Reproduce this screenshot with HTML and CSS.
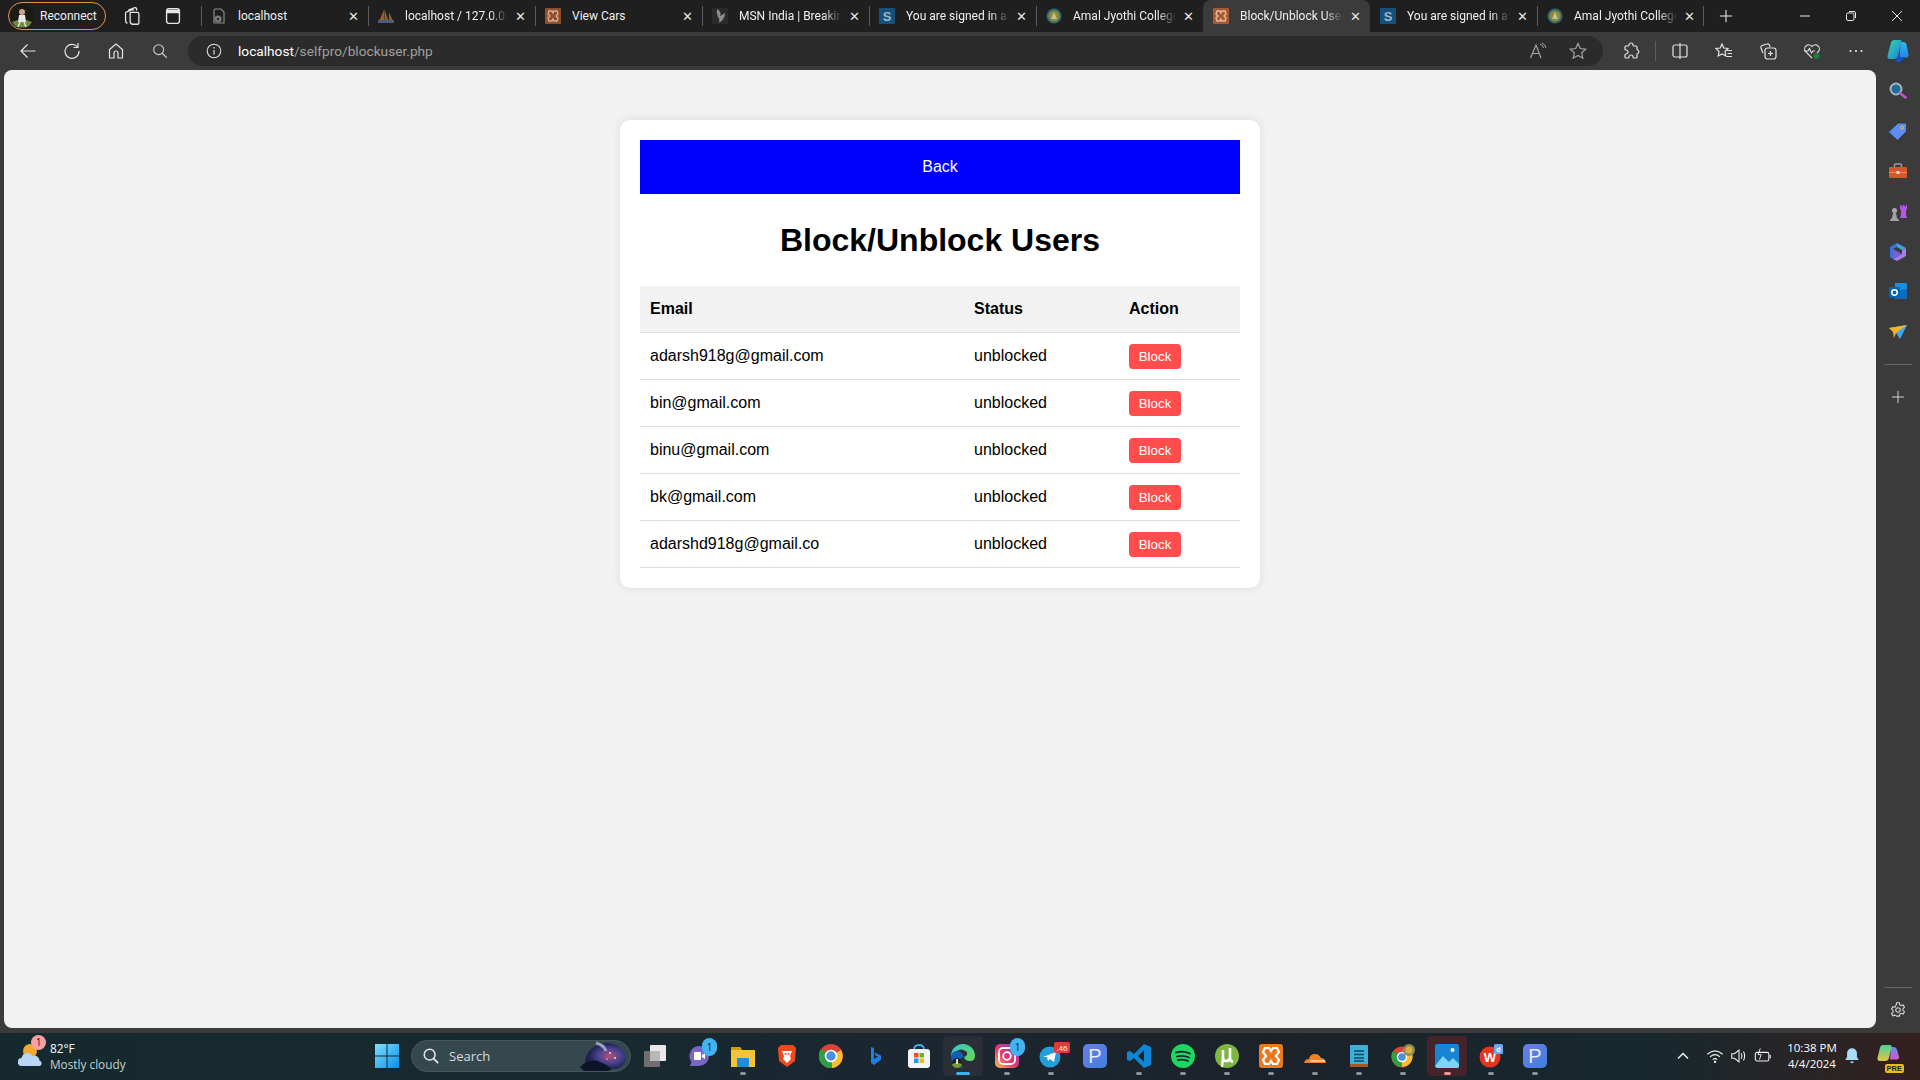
FILE: index.html
```html
<!DOCTYPE html>
<html lang="en">
<head>
<meta charset="utf-8">
<title>Block/Unblock Users</title>
<link rel="stylesheet" href="styles.css">
</head>
<body>
<header class="tabstrip">
  <div class="profile">
    <svg class="avatar" viewBox="0 0 24 24"><circle cx="12" cy="12" r="12" fill="#1b1b14"/><path d="M2 18q10-5 20 0l-3 4q-7 3-14 0z" fill="#6d8a3a"/><circle cx="12" cy="8" r="3" fill="#c9a68a"/><path d="M9 11h6l1 7h-8z" fill="#e8e8e8"/><path d="M10 18l-2 5M14 18l2 5" stroke="#ddd" stroke-width="1.6"/></svg>
    <span>Reconnect</span>
  </div>
  <span class="strip-btn first"><svg viewBox="0 0 24 24" class="ico"><path d="M8 5.500l7-2.500a2 2 0 0 1 2 1v2M5 8l7-3a2 2 0 0 1 2 1M10 8h8a1.500 1.500 0 0 1 1.500 1.500v10a1.500 1.500 0 0 1-1.500 1.500h-5a3 3 0 0 1-3-3zM5 8v9a3 3 0 0 0 2 3" fill="none" stroke="#e6e6e6" stroke-width="1.400"/></svg></span>
  <span class="strip-btn"><svg viewBox="0 0 24 24" class="ico"><rect x="5" y="4" width="14" height="16" rx="2.500" fill="none" stroke="#e6e6e6" stroke-width="1.500"/><path d="M5 5h14v4H5z" fill="#e6e6e6"/></svg></span>
  <div class="tabs">
    <div class="tab"><svg class="fav" viewBox="0 0 16 16"><path d="M4 1h6l3 3v11H3V2z" fill="none" stroke="#8a8a8a" stroke-width="1.200"/><circle cx="7" cy="11" r="3.600" fill="#7b7b7b"/><path d="M5.800 9.800l2.400 2.400M8.200 9.800l-2.400 2.400" stroke="#222"/></svg><span class="tab-title plain">localhost</span><span class="x">✕</span></div>
    <div class="tab"><svg class="fav" viewBox="0 0 16 16"><path d="M1 13L6 2v11zM6.500 1l4 12h-4zM11 4l4 9h-4z" fill="#8d6430"/><rect x="0" y="12" width="16" height="3" fill="#505c7a"/></svg><span class="tab-title">localhost / 127.0.0.1</span><span class="x">✕</span></div>
    <div class="tab"><svg class="fav" viewBox="0 0 16 16"><rect width="16" height="16" rx="1" fill="#8f4f2a"/><path d="M4 3h3l1 2 1-2h3l1 3-2 2 2 2-1 3H9L8 11l-1 2H4l-1-3 2-2-2-2z" fill="none" stroke="#d8b196" stroke-width="1.300"/></svg><span class="tab-title plain">View Cars</span><span class="x">✕</span></div>
    <div class="tab"><svg class="fav" viewBox="0 0 16 16"><rect width="16" height="16" fill="#2b2b2b"/><path d="M5 1q5 3 3 7l5-3q0 6-6 10 1-4-1-6-2-4-1-8z" fill="#8d8d8d"/></svg><span class="tab-title">MSN India | Breaking</span><span class="x">✕</span></div>
    <div class="tab"><svg class="fav" viewBox="0 0 16 16"><rect width="16" height="16" fill="#14507a"/><text x="8" y="12.500" class="fav-s">S</text></svg><span class="tab-title">You are signed in as</span><span class="x">✕</span></div>
    <div class="tab"><svg class="fav" viewBox="0 0 16 16"><circle cx="8" cy="8" r="7.500" fill="#2d6b78"/><circle cx="8" cy="8" r="5.500" fill="#8c8a34"/><path d="M8 4l3 7H5z" fill="#c4c090"/></svg><span class="tab-title">Amal Jyothi College</span><span class="x">✕</span></div>
    <div class="tab active"><svg class="fav" viewBox="0 0 16 16"><rect width="16" height="16" rx="1" fill="#a9592e"/><path d="M4 3h3l1 2 1-2h3l1 3-2 2 2 2-1 3H9L8 11l-1 2H4l-1-3 2-2-2-2z" fill="none" stroke="#e4c0a6" stroke-width="1.300"/></svg><span class="tab-title">Block/Unblock User</span><span class="x">✕</span></div>
    <div class="tab after-active"><svg class="fav" viewBox="0 0 16 16"><rect width="16" height="16" fill="#14507a"/><text x="8" y="12.500" class="fav-s">S</text></svg><span class="tab-title">You are signed in as</span><span class="x">✕</span></div>
    <div class="tab last"><svg class="fav" viewBox="0 0 16 16"><circle cx="8" cy="8" r="7.500" fill="#2d6b78"/><circle cx="8" cy="8" r="5.500" fill="#8c8a34"/><path d="M8 4l3 7H5z" fill="#c4c090"/></svg><span class="tab-title">Amal Jyothi College</span><span class="x">✕</span></div>
  </div>
  <span class="newtab"><svg viewBox="0 0 16 16" class="ico14"><path d="M8 1v14M1 8h14" stroke="#eee" stroke-width="1.200"/></svg></span>
  <div class="winctl">
    <span class="wbtn"><svg viewBox="0 0 12 12" class="ico12"><path d="M1 6h10" stroke="#e8e8e8"/></svg></span>
    <span class="wbtn"><svg viewBox="0 0 12 12" class="ico12"><rect x="1.500" y="3" width="7.500" height="7.500" rx="1.500" fill="none" stroke="#e8e8e8"/><path d="M4 1.500h5a1.500 1.500 0 0 1 1.500 1.500v5" fill="none" stroke="#e8e8e8"/></svg></span>
    <span class="wbtn"><svg viewBox="0 0 12 12" class="ico12"><path d="M1 1l10 10M11 1L1 11" stroke="#e8e8e8"/></svg></span>
  </div>
</header>

<nav class="toolbar">
  <span class="tb-btn first"><svg viewBox="0 0 20 20" class="ico20"><path d="M17.500 10H3M9.500 3.500L3 10l6.500 6.500" fill="none" stroke="#e4e4e4" stroke-width="1.200"/></svg></span>
  <span class="tb-btn"><svg viewBox="0 0 20 20" class="ico20"><path d="M15.500 6A7 7 0 1 0 17 10M16 2v4.500h-4.500" fill="none" stroke="#e4e4e4" stroke-width="1.200"/></svg></span>
  <span class="tb-btn"><svg viewBox="0 0 20 20" class="ico20"><path d="M3.500 8.500L10 3l6.500 5.500V17h-4.500v-5a2 2 0 0 0-4 0v5H3.500z" fill="none" stroke="#e4e4e4" stroke-width="1.200"/></svg></span>
  <span class="tb-btn"><svg viewBox="0 0 20 20" class="ico18"><circle cx="8.500" cy="8.500" r="5.500" fill="none" stroke="#d0d0d0" stroke-width="1.200"/><path d="M12.500 12.500l5 5" stroke="#d0d0d0" stroke-width="1.200"/></svg></span>
  <div class="address">
    <svg viewBox="0 0 20 20" class="ico-info"><circle cx="10" cy="10" r="7.500" fill="none" stroke="#e0e0e0" stroke-width="1.200"/><path d="M10 9v5" stroke="#e0e0e0" stroke-width="1.300"/><circle cx="10" cy="6.500" r=".9" fill="#e0e0e0"/></svg>
    <span class="url"><b>localhost</b>/selfpro/blockuser.php</span>
    <span class="addr-tools">
      <svg viewBox="0 0 20 20" class="ico20"><path d="M2.500 17L8 4l5 13M4.500 12.500h7" fill="none" stroke="#a5a5a5" stroke-width="1.200"/><path d="M12 3q3 1 3.500 4M14 2q3.500 1.500 4 5" fill="none" stroke="#a5a5a5"/></svg>
      <svg viewBox="0 0 20 20" class="ico20"><path d="M10 2.500l2.300 5 5.400.6-4 3.700 1.100 5.400L10 14.500l-4.800 2.700 1.100-5.400-4-3.700 5.400-.6z" fill="none" stroke="#a5a5a5" stroke-width="1.200"/></svg>
    </span>
  </div>
  <span class="tb-btn ext"><svg viewBox="0 0 20 20" class="ico20"><path d="M8 4a2 2 0 0 1 4 0q0 1 1.500 1H15a1 1 0 0 1 1 1v2q0 1 .800 1a2 2 0 0 1 0 3.500q-.8 0-.8 1V16a1 1 0 0 1-1 1h-2q-1 0-1-1a2 2 0 0 0-4 0q0 1-1 1H5a1 1 0 0 1-1-1v-2q0-1 1-1a2 2 0 0 0 0-4q-1 0-1-1V6a1 1 0 0 1 1-1h1.500Q8 5 8 4z" fill="none" stroke="#e4e4e4" stroke-width="1.200" stroke-linejoin="round"/></svg></span>
  <span class="tb-sep"></span>
  <span class="tb-btn split"><svg viewBox="0 0 20 20" class="ico20"><rect x="3" y="4" width="14" height="12" rx="2" fill="none" stroke="#e4e4e4" stroke-width="1.200"/><path d="M10 2v16" stroke="#e4e4e4" stroke-width="1.200"/></svg></span>
  <span class="tb-btn"><svg viewBox="0 0 20 20" class="ico20"><path d="M8 3l1.800 4 4.200.5-3 3 .8 4.500L8 13l-3.800 2 .8-4.500-3-3 4.200-.5zM13 9.500h5M13.500 12.500h4.500M12 15.500h6" fill="none" stroke="#e4e4e4" stroke-width="1.200"/></svg></span>
  <span class="tb-btn"><svg viewBox="0 0 20 20" class="ico20"><path d="M5 12L3 7a2 2 0 0 1 1-2.500L9 3a2 2 0 0 1 2.500 1l.5 2" fill="none" stroke="#e4e4e4" stroke-width="1.200"/><rect x="7" y="7" width="11" height="11" rx="2.500" fill="none" stroke="#e4e4e4" stroke-width="1.200"/><path d="M12.500 10v5M10 12.500h5" stroke="#e4e4e4" stroke-width="1.200"/></svg></span>
  <span class="tb-btn"><svg viewBox="0 0 20 20" class="ico20"><path d="M10 17L3.500 10.500a4 4 0 0 1 6.500-5 4 4 0 0 1 6.500 5L15 12M2 10h4l1.500-2.500 2 4.500 1.500-2h2" fill="none" stroke="#e4e4e4" stroke-width="1.100"/><circle cx="14.500" cy="15" r="3" fill="#1a7f37"/></svg></span>
  <span class="tb-btn"><svg viewBox="0 0 20 20" class="ico20"><circle cx="4.500" cy="10" r="1.100" fill="#e4e4e4"/><circle cx="10" cy="10" r="1.100" fill="#e4e4e4"/><circle cx="15.500" cy="10" r="1.100" fill="#e4e4e4"/></svg></span>
  <span class="tb-btn copilot"><svg viewBox="0 0 24 24" class="ico24"><defs><linearGradient id="cpa" x1="0" y1="0" x2="1" y2="1"><stop offset="0" stop-color="#35d6a5"/><stop offset="1" stop-color="#1c7fe0"/></linearGradient><linearGradient id="cpb" x1="0" y1="0" x2="0" y2="1"><stop offset="0" stop-color="#2cb6f0"/><stop offset="1" stop-color="#1f86ee"/></linearGradient></defs><path d="M16 3h3q2 0 2.500 2.500l2 10q.5 3-2.500 3h-5q-2 0-1.500-2.500L16 3z" fill="url(#cpb)"/><path d="M9 1h6q2 0 1.500 2L13 17q-.8 3-4 3H5q-3 0-2.500-3L6 3.500Q6.500 1 9 1z" fill="url(#cpa)"/><path d="M13 17q-1 4-3 6h5q2 0 3-3l1-2h-5z" fill="#1552c8"/></svg></span>
</nav>

<div class="workspace">
  <main class="page">
    <section class="card">
      <a class="back" href="#">Back</a>
      <h1>Block/Unblock Users</h1>
      <table class="users">
        <thead>
          <tr><th class="c-email">Email</th><th class="c-status">Status</th><th class="c-action">Action</th></tr>
        </thead>
        <tbody>
          <tr><td>adarsh918g@gmail.com</td><td>unblocked</td><td class="act"><button class="block">Block</button></td></tr>
          <tr><td>bin@gmail.com</td><td>unblocked</td><td class="act"><button class="block">Block</button></td></tr>
          <tr><td>binu@gmail.com</td><td>unblocked</td><td class="act"><button class="block">Block</button></td></tr>
          <tr><td>bk@gmail.com</td><td>unblocked</td><td class="act"><button class="block">Block</button></td></tr>
          <tr><td>adarshd918g@gmail.co</td><td>unblocked</td><td class="act"><button class="block">Block</button></td></tr>
        </tbody>
      </table>
    </section>
  </main>
  <aside class="sidebar">
    <span class="side-btn"><svg viewBox="0 0 20 20" class="ico20"><circle cx="8" cy="8" r="5.500" fill="#1f6d9c" stroke="#a8b4ba" stroke-width="2"/><path d="M12.500 12.500l5 4" stroke="#c64fd8" stroke-width="2.600" stroke-linecap="round"/></svg></span>
    <span class="side-btn"><svg viewBox="0 0 20 20" class="ico20"><path d="M1.500 11L10 3h7.500v7.500l-8 8z" fill="#5b8cf5" stroke="#5b8cf5" stroke-linejoin="round"/><circle cx="14" cy="6.500" r="1.500" fill="none" stroke="#f4c430"/></svg></span>
    <span class="side-btn"><svg viewBox="0 0 20 20" class="ico20"><path d="M6.500 6V4a1 1 0 0 1 1-1h5a1 1 0 0 1 1 1v2" fill="none" stroke="#9aa0a6" stroke-width="1.400"/><rect x="1" y="6" width="18" height="11" rx="1" fill="#d9562b"/><path d="M1 11.500h18" stroke="#f08a5d"/><rect x="8.500" y="10" width="3" height="3" fill="#d6d6d6"/></svg></span>
    <span class="side-btn"><svg viewBox="0 0 20 20" class="ico20"><path d="M12 3h1.500v1.500H15V3h1.500v1.500H18V3h1v4l-1 1v5l1 3h-7l1-3V8l-1-1z" fill="#b455e8"/><circle cx="6.500" cy="8.500" r="2.500" fill="#a9a9a9"/><path d="M5 11h3l1 5 2 2v1H2v-1l2-2z" fill="#a0a0a0"/></svg></span>
    <span class="side-btn"><svg viewBox="0 0 20 20" class="ico20"><path d="M9 1L2 5v10l3 2V7l4-2z" fill="#3f6fe0"/><path d="M9 1l9 5-4 2-5-3z" fill="#36a6e0"/><path d="M18 6v8l-9 5-4-2 9-5V8z" fill="#a77ee8"/><path d="M5 7l9 5-9 5z" fill="#7b5fd6"/></svg></span>
    <span class="side-btn"><svg viewBox="0 0 20 20" class="ico20"><path d="M7 1h12v14a2 2 0 0 1-2 2H7z" fill="#1490df"/><path d="M7 9l12-2v10H7z" fill="#0f6cbd"/><rect x="1" y="5" width="11" height="11" rx="1" fill="#0364b8"/><circle cx="6.500" cy="10.500" r="2.700" fill="none" stroke="#fff" stroke-width="1.500"/></svg></span>
    <span class="side-btn"><svg viewBox="0 0 20 20" class="ico20"><path d="M1 6l18-3-7 14-4-6z" fill="#3ea6f5"/><path d="M1 6l18-3L8 11l-2 5-1-6z" fill="#f0b429"/></svg></span>
    <span class="side-sep"></span>
    <span class="side-btn"><svg viewBox="0 0 16 16" class="ico14"><path d="M8 1v14M1 8h14" stroke="#d6d6d6" stroke-width="1.100"/></svg></span>
    <span class="side-spacer"></span>
    <span class="side-sep low"></span>
    <span class="side-btn settings"><svg viewBox="0 0 20 20" class="ico18"><path d="M8.500 2h3l.5 2.300 1.500.8 2.200-.8 1.500 2.600-1.700 1.600v1.800l1.700 1.600-1.500 2.600-2.200-.8-1.500.8-.5 2.300h-3L8 16.500l-1.500-.8-2.200.8-1.500-2.600 1.700-1.600V10.500L2.800 8.900l1.500-2.600 2.200.8L8 4.300z" fill="none" stroke="#d8d8d8" stroke-width="1.200"/><circle cx="10" cy="10" r="2.500" fill="none" stroke="#d8d8d8" stroke-width="1.200"/></svg></span>
  </aside>
</div>

<footer class="taskbar">
  <div class="weather">
    <svg viewBox="0 0 26 26" class="weather-ico"><circle cx="12" cy="8" r="7" fill="#f0a92c"/><path d="M4 23a4 4 0 0 1-.5-8 6 6 0 0 1 11-2 5 5 0 0 1 7 4.500 3 3 0 0 1 .5 5.500z" fill="#b9d6f5"/></svg>
    <span class="w-badge">1</span>
    <div class="w-text"><span class="w-temp">82°F</span><span class="w-desc">Mostly cloudy</span></div>
  </div>
  <span class="start"><svg viewBox="0 0 24 24" class="ico-start"><defs><linearGradient id="win" x1="0" y1="0" x2="1" y2="1"><stop offset="0" stop-color="#7fe0ff"/><stop offset="1" stop-color="#0a8fe8"/></linearGradient></defs><path d="M0 0h11.500v11.500H0zM12.500 0H24v11.500H12.500zM0 12.500h11.500V24H0zM12.500 12.500H24V24H12.500z" fill="url(#win)"/></svg></span>
  <div class="search">
    <svg viewBox="0 0 20 20" class="ico18"><circle cx="8.500" cy="8.500" r="6" fill="none" stroke="#e6e6e6" stroke-width="1.700"/><path d="M13 13l5 5" stroke="#e6e6e6" stroke-width="1.900"/></svg>
    <span>Search</span>
    <svg viewBox="0 0 48 30" class="search-art"><defs><radialGradient id="art" cx=".6" cy=".5"><stop offset="0" stop-color="#b0507c"/><stop offset=".6" stop-color="#44418f"/><stop offset="1" stop-color="#20234e"/></radialGradient></defs><path d="M5 20Q8 4 26 2q16 0 20 14 0 9-10 12H12Q5 26 5 20z" fill="url(#art)"/><path d="M0 26q8-8 18-6 8 3 14 8l-4 2H4z" fill="#0e1428"/><path d="M16 2q8 2 10 8" stroke="#9aa3ba" stroke-width="3" fill="none"/><circle cx="30" cy="12" r="1" fill="#ffd9e4"/><circle cx="35" cy="17" r="1" fill="#ffd9e4"/><circle cx="27" cy="18" r="1" fill="#f07aa0"/></svg>
  </div>
  <div class="apps">
    <span class="app"><svg viewBox="0 0 24 24" class="app-ico"><rect x="7" y="1" width="16" height="16" rx="1" fill="#e8e8e8"/><rect x="1" y="7" width="16" height="16" rx="1" fill="#6f6f6f"/><rect x="7" y="7" width="10" height="10" fill="#b8b8b8"/></svg></span>
    <span class="app"><svg viewBox="0 0 24 24" class="app-ico"><path d="M12 2a10 10 0 0 1 0 20H3l1.500-4A10 10 0 0 1 12 2z" fill="#7b64c8"/><rect x="7" y="8" width="7" height="8" rx="1" fill="#fff"/><path d="M15 11l3-2v6l-3-2z" fill="#fff"/></svg><span class="bubble">1</span></span>
    <span class="app running"><svg viewBox="0 0 24 24" class="app-ico"><path d="M0 3h9l2 3h13v17H0z" fill="#f5c530"/><path d="M0 3h9l2 3H0z" fill="#d09a1a"/><rect x="6" y="14" width="12" height="9" rx="1" fill="#1a8fd8"/></svg></span>
    <span class="app"><svg viewBox="0 0 24 24" class="app-ico"><path d="M6 1h12l3 3-1 13-8 6-8-6L3 4z" fill="#f1481d"/><path d="M7 7h10l-2 5 1 3-4 4-4-4 1-3z" fill="#fff"/><path d="M9.500 10h2M12.500 10h2" stroke="#f1481d" stroke-width="1.400"/></svg></span>
    <span class="app"><svg viewBox="0 0 24 24" class="app-ico"><circle cx="12" cy="12" r="12" fill="#db4437"/><path d="M12 12L22 6a12 12 0 0 1-9 18z" fill="#fbc02d"/><path d="M12 12L13 24A12 12 0 0 1 2 5z" fill="#2f9e44"/><circle cx="12" cy="12" r="5.500" fill="#4a90e2" stroke="#fff" stroke-width="1.600"/></svg></span>
    <span class="app"><svg viewBox="0 0 24 24" class="app-ico"><path d="M8 3l3 1v11l4-2.500-2.500-1-1-3 6.500 3v4l-7 5.500-3-2z" fill="#1f7fe8"/></svg></span>
    <span class="app"><svg viewBox="0 0 24 24" class="app-ico"><path d="M7 6q0-5 5-5t5 5" fill="none" stroke="#3ab4e6" stroke-width="1.800"/><rect x="1" y="5" width="22" height="19" rx="3" fill="#f4f4f4"/><rect x="7" y="9" width="4.500" height="4.500" fill="#e8502a"/><rect x="12.500" y="9" width="4.500" height="4.500" fill="#6ab42d"/><rect x="7" y="14.500" width="4.500" height="4.500" fill="#1e9ae0"/><rect x="12.500" y="14.500" width="4.500" height="4.500" fill="#f6b916"/></svg></span>
    <span class="app active-app"><svg viewBox="0 0 24 24" class="app-ico"><defs><linearGradient id="edge" x1="0" y1="0" x2="1" y2="1"><stop offset="0" stop-color="#36c6d8"/><stop offset="1" stop-color="#68d84a"/></linearGradient></defs><path d="M0 12A12 12 0 0 1 24 12q0 5-5 5t-6-4q4-1 3-5Q10 3 4 8q-3 2-4 4z" fill="url(#edge)"/><path d="M0 12q1-5 6-5t7 6q-5 1-4 6l3 5A12 12 0 0 1 0 12z" fill="#0f5fb8"/><circle cx="6" cy="19" r="5" fill="#20201c"/><path d="M1 20q5-2 10 0-1 4-5 4t-5-4z" fill="#7a9a34"/><rect x="5" y="15" width="2" height="5" fill="#ddd"/></svg></span>
    <span class="app running"><svg viewBox="0 0 24 24" class="app-ico"><defs><linearGradient id="ig" x1="0" y1="1" x2="1" y2="0"><stop offset="0" stop-color="#fdc15a"/><stop offset=".45" stop-color="#e8356a"/><stop offset="1" stop-color="#7c3bd0"/></linearGradient></defs><rect width="24" height="24" rx="5" fill="url(#ig)"/><rect x="4" y="4" width="16" height="16" rx="4" fill="none" stroke="#fff" stroke-width="1.800"/><circle cx="12" cy="12" r="3.800" fill="none" stroke="#fff" stroke-width="1.800"/></svg><span class="bubble">1</span></span>
    <span class="app running"><svg viewBox="0 0 24 24" class="app-ico"><circle cx="11" cy="13" r="10.500" fill="#229ed9"/><path d="M4 13l13-5-2 10-4-3-2 2-1-4z" fill="#fff"/></svg><span class="tg-badge">.46</span></span>
    <span class="app"><span class="p-tile">P</span></span>
    <span class="app running"><svg viewBox="0 0 24 24" class="app-ico"><path d="M17 0l7 3v18l-7 3L7 14l-4 3-3-1V8l3-1 4 3zM17 6l-6 6 6 6z" fill="#0f86d6"/></svg></span>
    <span class="app running"><svg viewBox="0 0 24 24" class="app-ico"><circle cx="12" cy="12" r="12" fill="#1ed760"/><path d="M5 8.500q7-2 14 1M6 12.500q6-1.500 12 1M7 16q5-1 10 1" fill="none" stroke="#123" stroke-width="1.800" stroke-linecap="round"/></svg></span>
    <span class="app running"><svg viewBox="0 0 24 24" class="app-ico"><circle cx="12" cy="12" r="12" fill="#7eb640"/><path d="M8 6v8q0 3 3 3t4-3V4M15 14q0 3 3 4" fill="none" stroke="#fff" stroke-width="2.600"/><path d="M8 14l-1 9" stroke="#fff" stroke-width="2.400"/></svg></span>
    <span class="app running"><svg viewBox="0 0 24 24" class="app-ico"><rect width="24" height="24" rx="3" fill="#ed7a1f"/><path d="M6 4h4l2 3 2-3h4l2 4-3 4 3 4-2 4h-4l-2-3-2 3H6l-2-4 3-4-3-4z" fill="none" stroke="#fff" stroke-width="2.200"/></svg></span>
    <span class="app running"><svg viewBox="0 0 24 24" class="app-ico"><path d="M1 19q1-4 5-4 1-5 6-5 4 0 6 4 4 0 5 5z" fill="#f48120"/><path d="M7 17h15" stroke="#fff"/></svg></span>
    <span class="app running"><svg viewBox="0 0 24 24" class="app-ico"><rect x="3" y="1" width="18" height="22" rx="1" fill="#3fb1d8"/><rect x="3" y="20" width="18" height="3" fill="#a8561f"/><path d="M7 7h10M7 10.500h10M7 14h10M7 17h10" stroke="#12475c" stroke-width="1.500"/></svg></span>
    <span class="app running"><svg viewBox="0 0 24 24" class="app-ico"><circle cx="11" cy="13" r="10.500" fill="#db4437"/><path d="M11 13L21 9a10.500 10.500 0 0 1-10 14z" fill="#fbc02d"/><path d="M11 13v10A10.500 10.500 0 0 1 2 7z" fill="#2f9e44"/><circle cx="11" cy="13" r="4.500" fill="#4a90e2" stroke="#fff" stroke-width="1.400"/><circle cx="18" cy="6" r="6" fill="#8e8a5c"/><circle cx="18" cy="6" r="3.500" fill="#d9b33c"/></svg></span>
    <span class="app focused"><svg viewBox="0 0 24 24" class="app-ico"><rect width="24" height="24" rx="2" fill="#1784d6"/><path d="M0 22l8-10 6 6 4-4 6 6v2a2 2 0 0 1-2 2H2z" fill="#7fd4f5"/><circle cx="17.500" cy="6" r="2" fill="#fff"/></svg></span>
    <span class="app running"><svg viewBox="0 0 24 24" class="app-ico"><circle cx="11" cy="13" r="10.500" fill="#e8341f"/><text x="11" y="18" class="wps-w">W</text><rect x="15" y="0" width="9" height="10" rx="1.500" fill="#6aa8f0"/><text x="19.500" y="8" class="wps-d">d</text></svg></span>
    <span class="app running"><span class="p-tile">P</span></span>
  </div>
  <div class="tray">
    <span class="tray-i chevron"><svg viewBox="0 0 12 12" class="ico12"><path d="M1 8.500L6 3.500l5 5" fill="none" stroke="#f0f0f0" stroke-width="1.500"/></svg></span>
    <span class="tray-i"><svg viewBox="0 0 20 20" class="ico18"><path d="M1.500 8q8.500-7.500 17 0M4.500 11q5.500-5 11 0M7.500 14q2.500-2 5 0" fill="none" stroke="#f0f0f0" stroke-width="1.300"/><circle cx="10" cy="16.500" r="1.300" fill="#f0f0f0"/></svg></span>
    <span class="tray-i"><svg viewBox="0 0 20 20" class="ico18"><path d="M2 7.500h3L10 3.500v13l-5-4H2z" fill="none" stroke="#f0f0f0" stroke-width="1.200"/><path d="M12.500 7q1.500 3 0 6M15 5q2.500 5 0 10" fill="none" stroke="#f0f0f0" stroke-width="1.200"/></svg></span>
    <span class="tray-i"><svg viewBox="0 0 20 20" class="ico18"><rect x="1.500" y="6" width="15" height="9.500" rx="2" fill="none" stroke="#f0f0f0" stroke-width="1.200"/><path d="M18 9v3.500" stroke="#f0f0f0" stroke-width="1.300"/><path d="M7 1.500L4.500 8.500h3.500L6 14" fill="none" stroke="#f0f0f0"/></svg></span>
    <div class="clock"><span>10:38 PM</span><span>4/4/2024</span></div>
    <span class="bell"><svg viewBox="0 0 20 20" class="ico18"><path d="M10 1.500a5.500 5.500 0 0 1 5.500 5.500v4l2 3.500h-15l2-3.500V7A5.500 5.500 0 0 1 10 1.500z" fill="#a9dcf5"/><path d="M8 16h4a2 2 0 0 1-4 0z" fill="#a9dcf5"/></svg></span>
    <span class="tray-copilot"><svg viewBox="0 0 24 24" class="ico24"><defs><linearGradient id="cp2" x1="0" y1="0" x2="0" y2="1"><stop offset="0" stop-color="#45d6a0"/><stop offset="1" stop-color="#e8c23c"/></linearGradient><linearGradient id="cp3" x1="0" y1="0" x2="0" y2="1"><stop offset="0" stop-color="#6a8cf0"/><stop offset="1" stop-color="#d458c8"/></linearGradient></defs><path d="M15 3h3q2 0 3 2.500l2 7q.5 3-2.500 3H14z" fill="url(#cp3)"/><path d="M7 1h7q2 0 1.500 2L13 14q-.8 3-4 3H4q-3 0-2.500-3L4 3.500Q4.500 1 7 1z" fill="url(#cp2)"/></svg><span class="pre">PRE</span></span>
  </div>
</footer>
</body>
</html>
```

FILE: styles.css
```css
* { box-sizing: border-box; }
html, body { margin: 0; height: 100%; }
body {
  width: 1920px;
  height: 1080px;
  overflow: hidden;
  background: #3b3b3b;
  display: flex;
  flex-direction: column;
  font-family: "Liberation Sans", Arial, sans-serif;
}
svg { display: block; flex: none; }
.ico { width: 24px; height: 24px; }
.ico12 { width: 12px; height: 12px; }
.ico14 { width: 14px; height: 14px; }
.ico18 { width: 18px; height: 18px; }
.ico20 { width: 20px; height: 20px; }
.ico24 { width: 24px; height: 24px; }

/* tab strip */
.tabstrip {
  height: 32px;
  flex: none;
  background: #1f1f1f;
  display: flex;
  align-items: center;
  color: #f0f0f0;
  font: 12px Roboto, sans-serif;
}
.profile {
  width: 98px;
  height: 28px;
  margin-left: 8px;
  border: 1.5px solid #dd9453;
  border-radius: 14px;
  display: flex;
  align-items: center;
  gap: 6px;
  padding-left: 1px;
}
.avatar { width: 24px; height: 24px; }
.strip-btn { width: 41px; display: flex; justify-content: center; }
.strip-btn.first { margin-left: 5px; }
.strip-btn .ico { width: 22px; height: 22px; }
.tabs { display: flex; height: 32px; margin-left: 8px; }
.tab {
  width: 167px;
  height: 32px;
  display: flex;
  align-items: center;
  padding: 0 5px 0 10px;
  position: relative;
}
.tab::before {
  content: "";
  position: absolute;
  left: 0;
  top: 6px;
  width: 1px;
  height: 20px;
  background: #5a5a5a;
}
.tab.last::after {
  content: "";
  position: absolute;
  right: 0;
  top: 6px;
  width: 1px;
  height: 20px;
  background: #5a5a5a;
}
.tab.active { background: #3b3b3b; border-radius: 8px 8px 0 0; }
.tab.active::before, .tab.after-active::before { display: none; }
.fav { width: 16px; height: 16px; }
.tab-title {
  flex: 1;
  min-width: 0;
  margin-left: 11px;
  white-space: nowrap;
  overflow: hidden;
  -webkit-mask-image: linear-gradient(90deg, #000 82%, transparent 100%);
  mask-image: linear-gradient(90deg, #000 82%, transparent 100%);
}
.tab-title.plain { -webkit-mask-image: none; mask-image: none; }
.x { width: 20px; text-align: center; font-size: 13px; color: #e6e6e6; margin-left: 2px; }
.fav-s { font: bold 13px "Liberation Sans", sans-serif; fill: #9ab8cc; text-anchor: middle; }
.newtab { width: 44px; display: flex; justify-content: center; }
.winctl { margin-left: auto; display: flex; }
.wbtn { width: 46px; display: flex; justify-content: center; }

/* toolbar */
.toolbar {
  height: 38px;
  flex: none;
  background: #3b3b3b;
  display: flex;
  align-items: center;
  font: 13.700px Roboto, sans-serif;
}
.tb-btn { width: 44px; height: 30px; display: flex; align-items: center; justify-content: center; }
.tb-btn.first { margin-left: 6px; }
.address {
  width: 1415px;
  height: 30px;
  margin-left: 6px;
  background: #2b2b2b;
  border-radius: 15px;
  display: flex;
  align-items: center;
  padding-left: 17px;
  color: #a0a0a0;
}
.ico-info { width: 18px; height: 18px; }
.url { margin-left: 15px; }
.url b { font-weight: 400; color: #fff; }
.addr-tools { margin-left: auto; display: flex; gap: 20px; padding-right: 15px; }
.ext { margin-left: 6px; }
.tb-sep { width: 1px; height: 20px; background: #5e5e5e; margin-left: 2px; }
.split { margin-left: 2px; }
.copilot { margin-left: -3px; }

/* main */
.workspace { flex: none; height: 958px; display: flex; }
.page {
  width: 1872px;
  margin-left: 4px;
  background: #f2f2f2;
  border-radius: 8px;
  padding-top: 50px;
}
.card {
  width: 640px;
  margin: 0 auto;
  background: #fff;
  padding: 20px;
  border-radius: 10px;
  box-shadow: 0 0 10px rgba(0, 0, 0, .1);
}
.back {
  display: block;
  height: 54px;
  line-height: 54px;
  background: #00f;
  color: #fff;
  text-align: center;
  text-decoration: none;
  font-size: 16px;
}
h1 {
  margin: 28px 0 27px;
  font-size: 32px;
  line-height: 37px;
  text-align: center;
  color: #000;
}
.users { width: 100%; table-layout: fixed; border-collapse: collapse; font-size: 16px; }
.users th, .users td { text-align: left; border-bottom: 1px solid #ddd; padding: 10px 10px 11px; }
.users td.act { padding: 11px 10px 10px; }
.users th { background: #f2f2f2; padding: 14px 10px; }
.c-email { width: 324px; }
.c-status { width: 155px; }
.block {
  display: inline-block;
  width: 52px;
  height: 25px;
  background: #ff4d4d;
  color: #fff;
  border: 0;
  border-radius: 4px;
  padding: 5px 0;
  font: 13.333px "Liberation Sans", Arial, sans-serif;
}

/* sidebar */
.sidebar {
  width: 44px;
  display: flex;
  flex-direction: column;
  align-items: center;
  padding-top: 1px;
}
.side-btn { width: 44px; height: 40.200px; display: flex; align-items: center; justify-content: center; flex: none; }
.side-sep { width: 28px; height: 1px; background: #666; margin: 12px 0; flex: none; }
.side-sep.low { margin: 0 0 2px; }
.side-spacer { flex: 1; }
.settings { margin-bottom: -2px; }

/* taskbar */
.taskbar {
  margin-top: 5px;
  height: 47px;
  padding-bottom: 2px;
  flex: none;
  display: flex;
  align-items: center;
  background: linear-gradient(90deg, #15292e 0, #172a30 28%, #1b2630 50%, #1c2229 66%, #16282e 85%, #2a2425 95%, #351f1f 100%);
  color: #fff;
  font: 12px "Open Sans", sans-serif;
}
.weather { width: 375px; display: flex; align-items: center; padding-left: 18px; position: relative; }
.weather-ico { width: 26px; height: 26px; }
.w-badge {
  position: absolute;
  left: 31px;
  top: -5px;
  width: 15px;
  height: 15px;
  border-radius: 50%;
  background: #f8a0a6;
  color: #222;
  font-size: 10px;
  line-height: 15px;
  text-align: center;
}
.w-text { display: flex; flex-direction: column; margin-left: 6px; line-height: 16px; font-size: 11.800px; }
.w-desc { color: #c9d0d2; }
.start { width: 24px; height: 24px; display: block; }
.ico-start { width: 24px; height: 24px; }
.search {
  width: 220px;
  height: 32px;
  margin-left: 12px;
  border-radius: 16px;
  background: #35484d;
  border: 1px solid #46585c;
  display: flex;
  align-items: center;
  padding-left: 10px;
  color: #d6dcdd;
  font-size: 13px;
  position: relative;
}
.search span { margin-left: 9px; }
.search-art { position: absolute; right: 2px; top: 0; width: 48px; height: 30px; }
.apps { display: flex; margin-left: 2px; height: 45px; }
.app {
  width: 44px;
  height: 45px;
  display: flex;
  align-items: center;
  justify-content: center;
  position: relative;
}
.app-ico { width: 24px; height: 24px; }
.running::after, .active-app::after, .focused::after {
  content: "";
  position: absolute;
  left: 50%;
  bottom: 3px;
  width: 6px;
  height: 3px;
  margin-left: -3px;
  border-radius: 2px;
  background: #8d9296;
}
.active-app::before, .focused::before {
  content: "";
  position: absolute;
  left: 2px;
  right: 2px;
  top: 3px;
  bottom: 2px;
  border-radius: 4px;
  background: #2a2f37;
}
.focused::before { background: #43242a; }
.active-app svg, .focused svg { position: relative; }
.active-app::after { width: 14px; margin-left: -7px; background: #3bb2f0; }
.focused::after { background: #f58e99; width: 7px; }
.bubble {
  position: absolute;
  top: 5px;
  right: 4px;
  width: 15px;
  height: 18px;
  border-radius: 8px;
  background: #43b3f0;
  color: #123;
  font-size: 10px;
  line-height: 18px;
  text-align: center;
}
.tg-badge {
  position: absolute;
  top: 9px;
  right: 3px;
  width: 16px;
  height: 11px;
  border-radius: 2px;
  background: #e53935;
  color: #fff;
  font-size: 8px;
  line-height: 11px;
  text-align: center;
}
.p-tile {
  width: 24px;
  height: 24px;
  border-radius: 5px;
  background: linear-gradient(135deg, #6d7cf0, #3f7fd8);
  color: #e8ecff;
  font: 20px/24px "Liberation Sans", sans-serif;
  text-align: center;
}
.wps-w { font: bold 13px "Liberation Sans", sans-serif; fill: #fff; text-anchor: middle; }
.wps-d { font: bold 7px "Liberation Sans", sans-serif; fill: #fff; text-anchor: middle; }
.tray { margin-left: auto; display: flex; align-items: center; padding-right: 14px; }
.tray-i { width: 24px; display: flex; justify-content: center; }
.chevron { margin-right: 8px; }
.clock { width: 60px; margin-left: 7px; display: flex; flex-direction: column; align-items: center; line-height: 16px; font-size: 11.500px; }
.bell { width: 20px; display: flex; justify-content: center; }
.tray-copilot { width: 36px; margin-left: 8px; display: flex; justify-content: center; position: relative; }
.pre {
  position: absolute;
  right: 2px;
  bottom: -5px;
  background: #f2b91d;
  color: #222;
  border-radius: 2px;
  font: bold 7.500px/9px "Liberation Sans", sans-serif;
  padding: 0 2px;
}
```
